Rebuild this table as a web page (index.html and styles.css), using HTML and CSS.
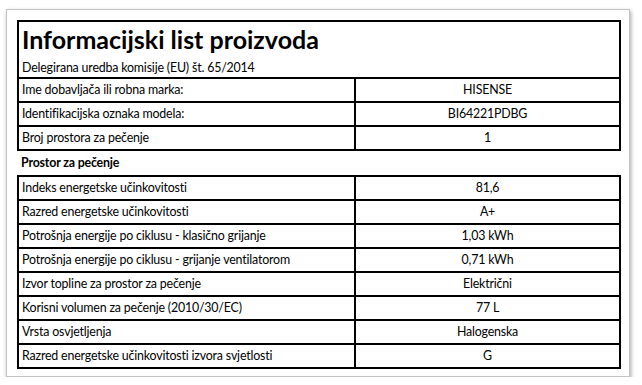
FILE: index.html
```html
<!DOCTYPE html>
<html lang="hr">
<head>
<meta charset="utf-8">
<title>Informacijski list proizvoda</title>
<link rel="stylesheet" href="styles.css">
</head>
<body>
<div class="card">
  <table class="sheet">
    <colgroup><col class="c1"><col class="c2"></colgroup>
    <tr>
      <td colspan="2" class="head">
        <div class="title">Informacijski list proizvoda</div>
        <div class="sub">Delegirana uredba komisije (EU) št. 65/2014</div>
      </td>
    </tr>
    <tr><td>Ime dobavljača ili robna marka:</td><td class="val">HISENSE</td></tr>
    <tr><td>Identifikacijska oznaka modela:</td><td class="val">BI64221PDBG</td></tr>
    <tr><td>Broj prostora za pečenje</td><td class="val">1</td></tr>
  </table>
  <div class="section">Prostor za pečenje</div>
  <table class="sheet">
    <colgroup><col class="c1"><col class="c2"></colgroup>
    <tr><td>Indeks energetske učinkovitosti</td><td class="val">81,6</td></tr>
    <tr><td>Razred energetske učinkovitosti</td><td class="val">A+</td></tr>
    <tr><td>Potrošnja energije po ciklusu - klasično grijanje</td><td class="val">1,03 kWh</td></tr>
    <tr><td>Potrošnja energije po ciklusu - grijanje ventilatorom</td><td class="val">0,71 kWh</td></tr>
    <tr><td>Izvor topline za prostor za pečenje</td><td class="val">Električni</td></tr>
    <tr><td>Korisni volumen za pečenje (2010/30/EC)</td><td class="val">77 L</td></tr>
    <tr><td>Vrsta osvjetljenja</td><td class="val">Halogenska</td></tr>
    <tr><td>Razred energetske učinkovitosti izvora svjetlosti</td><td class="val">G</td></tr>
  </table>
</div>
</body>
</html>
```

FILE: styles.css
```css
html, body {
  margin: 0;
  padding: 0;
  background: #fff;
}
body {
  font-family: Lato, "Open Sans", sans-serif;
  font-size: 12.4px;
  letter-spacing: -0.18px;
  color: #000;
}
.card {
  margin: 9px 0 0 6px;
  width: 601px;
  height: 346px;
  padding: 10px 11px 10px 10px;
  border: 1px solid #c4c4c4;
  box-shadow: 1px 2px 4px rgba(0, 0, 0, 0.35);
  background: #fff;
}
.sheet {
  width: 602px;
  border-collapse: collapse;
  table-layout: fixed;
}
.c1 { width: 337px; }
.c2 { width: 265px; }
.sheet td {
  border: 2px solid #000;
  height: 24px;
  padding: 0 3px;
  line-height: 16px;
  white-space: nowrap;
  box-sizing: border-box;
}
.sheet td.val {
  text-align: center;
}
.sheet td.head {
  height: 57px;
  padding: 2px 3px 0;
  vertical-align: top;
}
.title {
  font-weight: bold;
  font-size: 25px;
  line-height: 30px;
  letter-spacing: 0;
}
.sub {
  margin-top: 5px;
  line-height: 18px;
}
.section {
  height: 24px;
  line-height: 24px;
  padding-left: 4px;
  font-weight: bold;
}
```
